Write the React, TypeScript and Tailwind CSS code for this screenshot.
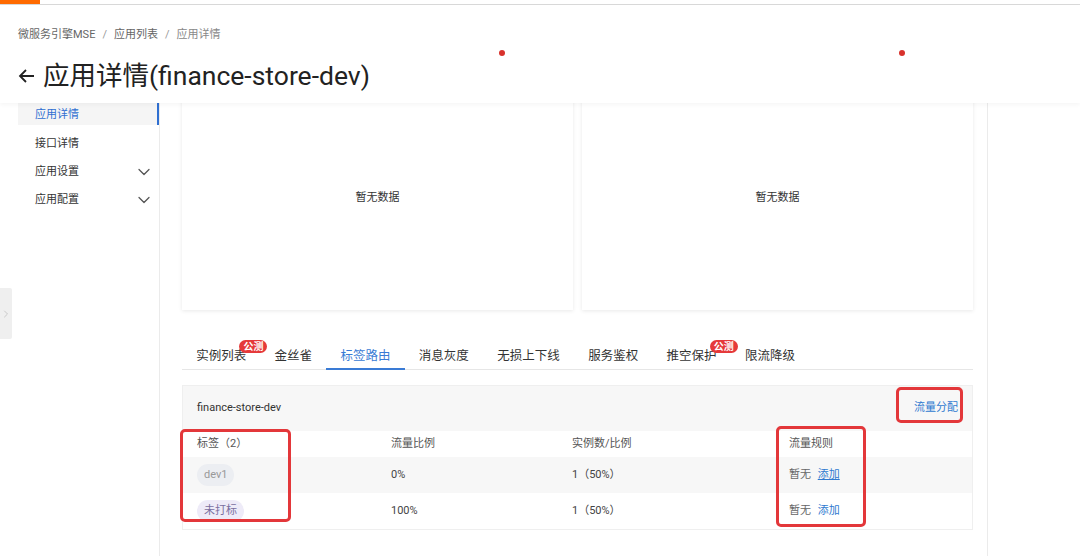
import { ChevronDown, ChevronRight } from 'lucide-react';

const tabs = [
  { label: '实例列表', badge: true },
  { label: '金丝雀' },
  { label: '标签路由', active: true },
  { label: '消息灰度' },
  { label: '无损上下线' },
  { label: '服务鉴权' },
  { label: '推空保护', badge: true },
  { label: '限流降级' },
];

const menu = [
  { label: '应用详情', active: true },
  { label: '接口详情' },
  { label: '应用设置', sub: true },
  { label: '应用配置', sub: true },
];

function EmptyCard() {
  return (
    <div className="w-[391px] h-[228px] -mt-[21px] pt-[4px] bg-white shadow-[0_1px_4px_rgba(0,0,0,0.09)] flex items-center justify-center text-[11px] text-[#333]">
      暂无数据
    </div>
  );
}

export default function App() {
  return (
    <div className="relative w-[1080px] h-[556px] overflow-hidden bg-white text-[#333] font-['Roboto','Noto_Sans_CJK_SC',sans-serif]">
      {/* top bar */}
      <div className="h-[5px] border-b border-[#d9d9d9] shadow-[0_1px_3px_rgba(0,0,0,0.08)]">
        <div className="w-[40px] h-[4px] bg-[#ff6a00]" />
      </div>

      {/* page header */}
      <header className="relative z-10 h-[98px] bg-white pl-[18px] pt-[21px] shadow-[0_2px_4px_rgba(0,0,0,0.04)]">
        <div className="h-[18px] leading-[18px] text-[11px] text-[#666] flex items-center gap-[7px]">
          <span>微服务引擎MSE</span>
          <span className="text-[#999]">/</span>
          <span>应用列表</span>
          <span className="text-[#999]">/</span>
          <span className="text-[#888]">应用详情</span>
        </div>
        <div className="mt-[15px] h-[34px] flex items-center text-[26.5px] text-[#222]">
          <svg width="17" height="16" viewBox="0 0 17 16" fill="none" stroke="#222" strokeWidth="1.8" className="mr-[8px]">
            <path d="M16 8H2M8 2L2 8l6 6" />
          </svg>
          <span>应用详情(finance-store-dev)</span>
        </div>
      </header>

      {/* body */}
      <div className="flex h-[453px]">
        {/* side menu */}
        <aside className="w-[160px] shrink-0 border-r border-[#ebebeb] text-[11px]">
          {menu.map((m, i) => (
            <div
              key={m.label}
              className={
                m.active
                  ? 'ml-[18px] h-[22px] pt-[3px] pl-[17px] flex items-center bg-[#f5f5f5] border-r-2 border-[#2f6fd1] text-[#2f6fd1]'
                  : i === 1
                  ? 'ml-[18px] mt-[4px] h-[28px] pt-[2px] pl-[17px] pr-[5px] flex items-center justify-between text-[#333]'
                  : 'ml-[18px] h-[28px] pt-[2px] pl-[17px] pr-[5px] flex items-center justify-between text-[#333]'
              }
            >
              <span>{m.label}</span>
              {m.sub && <ChevronDown size={20} strokeWidth={1.5} className="text-[#555]" />}
            </div>
          ))}
        </aside>

        {/* main */}
        <main className="w-[828px] shrink-0 border-r border-[#ebebeb] pl-[22px] pr-[14px]">
          <div className="flex gap-[9px]">
            <EmptyCard />
            <EmptyCard />
          </div>

          {/* tabs */}
          <div className="mt-[29px] flex border-b border-[#e6e6e6] text-[12.5px]">
            {tabs.map((t) => (
              <div
                key={t.label}
                className={
                  t.active
                    ? 'relative h-[30px] pt-[4px] px-[14.2px] flex items-center text-[#3a7bd5]'
                    : 'relative h-[30px] pt-[4px] px-[14.2px] flex items-center text-[#333]'
                }
              >
                {t.label}
                {t.active && <div className="absolute left-0 right-0 -bottom-[1px] h-[2px] bg-[#3a7bd5]" />}
                {t.badge && (
                  <span className="absolute top-[1px] -right-[7px] h-[13px] px-[4px] rounded-[7px] bg-[#e5393a] text-white text-[10px] leading-[13px] font-bold">
                    公测
                  </span>
                )}
              </div>
            ))}
          </div>

          {/* tag routing table */}
          <div className="mt-[15px] border border-[#efefef] text-[11px]">
            <div className="h-[45px] bg-[#f7f7f7] px-[14px] flex items-center justify-between">
              <span className="text-[#333]">finance-store-dev</span>
              <span className="text-[#2f7ad0]">流量分配</span>
            </div>
            <div className="h-[26px] pl-[14px] grid grid-cols-[194px_181px_217px_1fr] items-center text-[#555]">
              <span>标签（2）</span>
              <span>流量比例</span>
              <span>实例数/比例</span>
              <span>流量规则</span>
            </div>
            <div className="h-[36px] pl-[14px] grid grid-cols-[194px_181px_217px_1fr] items-center bg-[#f7f7f7] text-[#444]">
              <span>
                <span className="inline-flex h-[22px] px-[7px] items-center rounded-full bg-[#eceef2] text-[#999]">dev1</span>
              </span>
              <span>0%</span>
              <span>1（50%）</span>
              <span className="text-[#666]">
                暂无 <span className="ml-[4px] text-[#2f7ad0] underline">添加</span>
              </span>
            </div>
            <div className="h-[36px] pl-[14px] grid grid-cols-[194px_181px_217px_1fr] items-center text-[#444]">
              <span>
                <span className="inline-flex h-[22px] px-[7px] items-center rounded-full bg-[#eeebf8] text-[#7a6fa0]">未打标</span>
              </span>
              <span>100%</span>
              <span>1（50%）</span>
              <span className="text-[#666]">
                暂无 <span className="ml-[4px] text-[#2f7ad0]">添加</span>
              </span>
            </div>
          </div>
        </main>

        <div className="flex-1 bg-white" />
      </div>

      {/* collapse handle */}
      <div className="absolute left-0 top-[288px] w-[12px] h-[51px] bg-[#efefef] rounded-r-[2px] flex items-center justify-center">
        <ChevronRight size={12} strokeWidth={1.5} className="text-[#bbb]" />
      </div>

      {/* red markers */}
      <div className="absolute z-20 left-[499px] top-[50px] w-[6px] h-[6px] rounded-full bg-[#d8322c]" />
      <div className="absolute z-20 left-[899px] top-[50px] w-[6px] h-[6px] rounded-full bg-[#d8322c]" />

      {/* annotation boxes */}
      <div className="absolute left-[180px] top-[429px] w-[111px] h-[93px] border-[3px] border-[#e3373a] rounded-[5px]" />
      <div className="absolute left-[776px] top-[426px] w-[90px] h-[101px] border-[3px] border-[#e3373a] rounded-[5px]" />
      <div className="absolute left-[896px] top-[387px] w-[67px] h-[36px] border-[3px] border-[#e3373a] rounded-[5px]" />
    </div>
  );
}
